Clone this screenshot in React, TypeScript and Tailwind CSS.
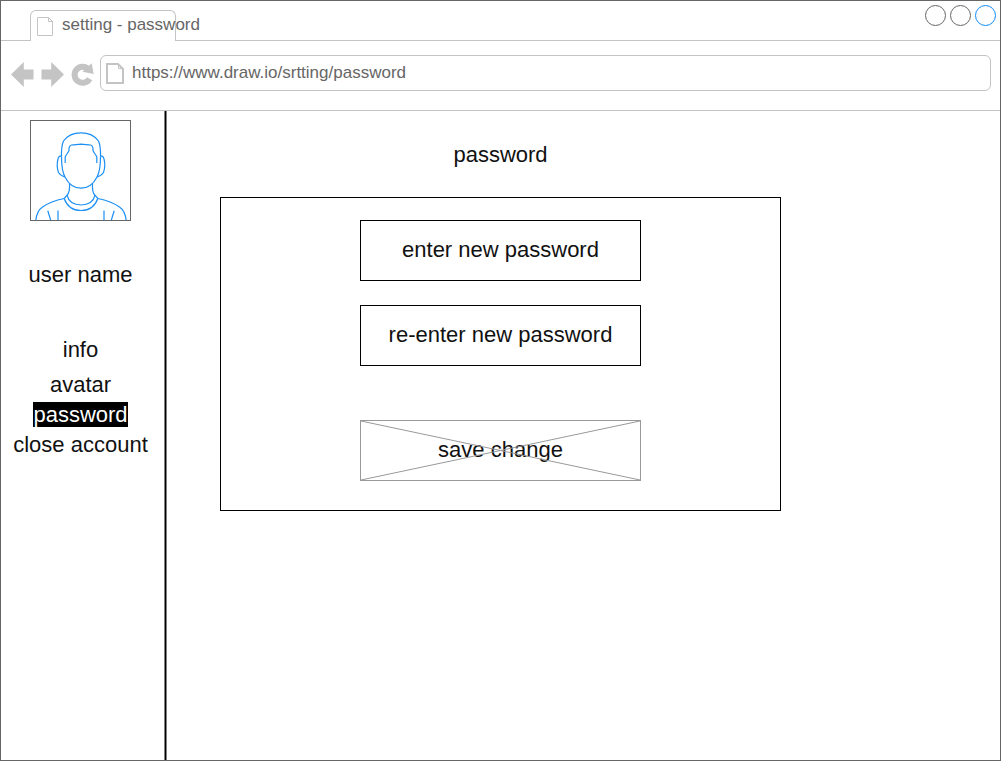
import { useState } from "react";

type MenuItem = { label: string; href: string; height: string };

const menu: MenuItem[] = [
  { label: "info", href: "#info", height: "h-[35px]" },
  { label: "avatar", href: "#avatar", height: "h-[30px]" },
  { label: "password", href: "#password", height: "h-[30px]" },
  { label: "close account", href: "#close", height: "h-[30px]" },
];

function TabPageIcon() {
  return (
    <svg viewBox="0 0 16 19" className="h-[19px] w-4 shrink-0" fill="none" stroke="#c4c4c4" aria-hidden="true">
      <path d="M.5.5H11.500L15.500 4.500V18.500H.5Z" />
      <path d="M11.500.5V4.500H15.500" />
    </svg>
  );
}

function AddressPageIcon() {
  return (
    <svg viewBox="0 0 18 21" className="h-[21px] w-[18px] shrink-0" fill="none" stroke="#c4c4c4" strokeWidth="2" aria-hidden="true">
      <path d="M1 1H12L17 6V20H1Z" />
      <path d="M12.500 1V5.500H17" strokeWidth="1" />
    </svg>
  );
}

function BackIcon() {
  return (
    <svg viewBox="0 0 23 25" className="h-[25px] w-[23px]" fill="#c4c4c4" aria-hidden="true">
      <path d="M0 12.500 12.800 0V7.500H22.500V17.500H12.800V25Z" />
    </svg>
  );
}

function ForwardIcon() {
  return (
    <svg viewBox="0 0 23 25" className="h-[25px] w-[23px]" fill="#c4c4c4" aria-hidden="true">
      <path d="M23 12.500 10.200 0V7.500H.5V17.500H10.200V25Z" />
    </svg>
  );
}

function ReloadIcon() {
  return (
    <svg viewBox="0 0 23 25" className="h-[25px] w-[23px]" aria-hidden="true">
      <path d="M17.400 7.200A8 8 0 1 0 18.600 16.700" fill="none" stroke="#c4c4c4" strokeWidth="6" />
      <path d="M20.700 1.200 22.700 12 11.300 9.800Z" fill="#c4c4c4" />
    </svg>
  );
}

function Avatar() {
  return (
    <div className="size-[101px] border border-[#666]">
      <svg viewBox="0.5 0.5 99 99" className="size-full" fill="none" stroke="#1b8ff5" strokeWidth="1.2" role="img" aria-label="user avatar">
        <path d="M31 36C30.800 30 31.500 24 33 20.500C36.500 15.500 43 12.300 50.500 12.300C58 12.300 64.500 15.500 68 20.500C69.500 24 70.200 30 70 36" />
        <path d="M34.700 42.500V36.500C35.500 34 38 32 38.500 30C38.300 27.500 39 25 41 24.500C44 23.800 46 24.300 50.500 23.700C55 24.300 57 23.800 60 24.500C62 25 62.700 27.500 62.500 30C63 32 65.500 34 66.300 36.500V42.500" />
        <path d="M31 36C31 44 32 52 34.500 56.500C38 63.500 43.500 67.700 50.500 67.700C57.500 67.700 63 63.500 66.500 56.500C69 52 70 44 70 36" />
        <path d="M31 35.300C29 35.300 27.700 36.700 27.400 39C26.300 43 26.700 48 28 52C29 53.500 31 55.800 34.500 56.300" />
        <path d="M70 35.300C72 35.300 73.300 36.700 73.600 39C74.700 43 74.300 48 73 52C72 53.500 70 55.800 66.500 56.300" />
        <path d="M39 62.700C39.300 68 39 72.500 36.500 74.700L33.700 78" />
        <path d="M62 62.700C61.700 68 62 72.500 64.500 74.700L67.300 78" />
        <path d="M36.500 74.700C38 81 43 84.500 50.500 84.500C58 84.500 63 81 64.500 74.700" />
        <path d="M33.700 78C36.500 86 43 90 50.500 90C58 90 64.500 86 67.300 78" />
        <path d="M5.300 100C6 94 7.500 89.500 12 86.500C17 83 24 80 33.700 78" />
        <path d="M95.700 100C95 94 93.500 89.500 89 86.500C84 83 77 80 67.300 78" />
        <path d="M17.300 90.300 20.300 100M27.500 90V100M83.700 90.300 80.700 100M73.500 90V100" />
      </svg>
    </div>
  );
}

function TabStrip() {
  return (
    <div className="flex h-10">
      <div className="w-[29px] shrink-0 border-b border-[#c4c4c4]" />
      <div className="mt-[9px] flex w-[146px] shrink-0 items-center gap-[9px] rounded-t-md border-x border-t border-[#c4c4c4] pl-1.5 text-[17px] leading-5 whitespace-nowrap text-[#666]">
        <TabPageIcon />
        <span className="-mt-0.5">setting - password</span>
      </div>
      <div className="flex flex-1 justify-end gap-1 border-b border-[#c4c4c4] pt-1 pr-1">
        <button aria-label="minimize" className="size-[21px] rounded-full border border-[#666]" />
        <button aria-label="maximize" className="size-[21px] rounded-full border border-[#666]" />
        <button aria-label="close" className="size-[21px] rounded-full border border-[#0d8bf7]" />
      </div>
    </div>
  );
}

function Toolbar() {
  const [url, setUrl] = useState("https://www.draw.io/srtting/password");
  return (
    <div className="flex h-[70px] items-start border-b border-[#c4c4c4] pt-3.5 pr-[9px] pl-2.5">
      <div className="flex h-[39px] items-center gap-[7px]">
        <button aria-label="back"><BackIcon /></button>
        <button aria-label="forward"><ForwardIcon /></button>
        <button aria-label="reload"><ReloadIcon /></button>
      </div>
      <div className="ml-1.5 flex h-9 flex-1 items-center gap-2 rounded-md border border-[#c4c4c4] pl-[5px]">
        <AddressPageIcon />
        <input
          aria-label="address"
          value={url}
          onChange={(e) => setUrl(e.target.value)}
          className="min-w-0 flex-1 bg-transparent text-[17px] leading-5 text-[#666] outline-none"
        />
      </div>
    </div>
  );
}

function Sidebar() {
  return (
    <aside className="flex w-[163px] shrink-0 flex-col items-center pt-[9px] pr-1">
      <Avatar />
      <p className="mt-[39px] h-[30px] leading-[30px]">user name</p>
      <nav className="mt-[45px] flex flex-col items-center whitespace-nowrap">
        {menu.map((item) => (
          <a key={item.label} href={item.href} className={`${item.height} leading-[30px]`}>
            <span className={item.label === "password" ? "bg-black text-white" : ""}>{item.label}</span>
          </a>
        ))}
      </nav>
    </aside>
  );
}

function PasswordForm() {
  const field =
    "h-[61px] w-full border border-black bg-white pb-0.5 text-center text-[#111] outline-none placeholder:text-[#111] placeholder:opacity-100";
  return (
    <main className="flex-1 px-[53px] pt-[29px]">
      <div className="max-w-[561px]">
        <h1 className="text-center leading-[30px]">password</h1>
        <form
          className="mt-[27px] flex flex-col items-center border border-black pt-[22px] pb-[29px]"
          onSubmit={(e) => e.preventDefault()}
        >
          <div className="flex w-[281px] flex-col">
            <input type="password" aria-label="enter new password" placeholder="enter new password" className={field} />
            <input type="password" aria-label="re-enter new password" placeholder="re-enter new password" className={`mt-6 ${field}`} />
            <button type="submit" className="relative mt-[54px] h-[61px] w-full border border-[#999] pb-0.5">
              save change
              <svg viewBox="0 0 279 59" preserveAspectRatio="none" className="absolute inset-0 size-full" stroke="#999" aria-hidden="true">
                <path d="M0 0 279 59M0 59 279 0" />
              </svg>
            </button>
          </div>
        </form>
      </div>
    </main>
  );
}

export default function App() {
  return (
    <div className="min-h-screen bg-white pb-px">
      <div className="flex min-h-[calc(100vh-1px)] flex-col border border-[#666] font-['Liberation_Sans',Arial,sans-serif] text-[22px] text-[#111]">
        <TabStrip />
        <Toolbar />
        <div className="flex flex-1">
          <Sidebar />
          <div className="w-[3px] shrink-0 border-x border-[#808080] bg-black" />
          <PasswordForm />
        </div>
      </div>
    </div>
  );
}
